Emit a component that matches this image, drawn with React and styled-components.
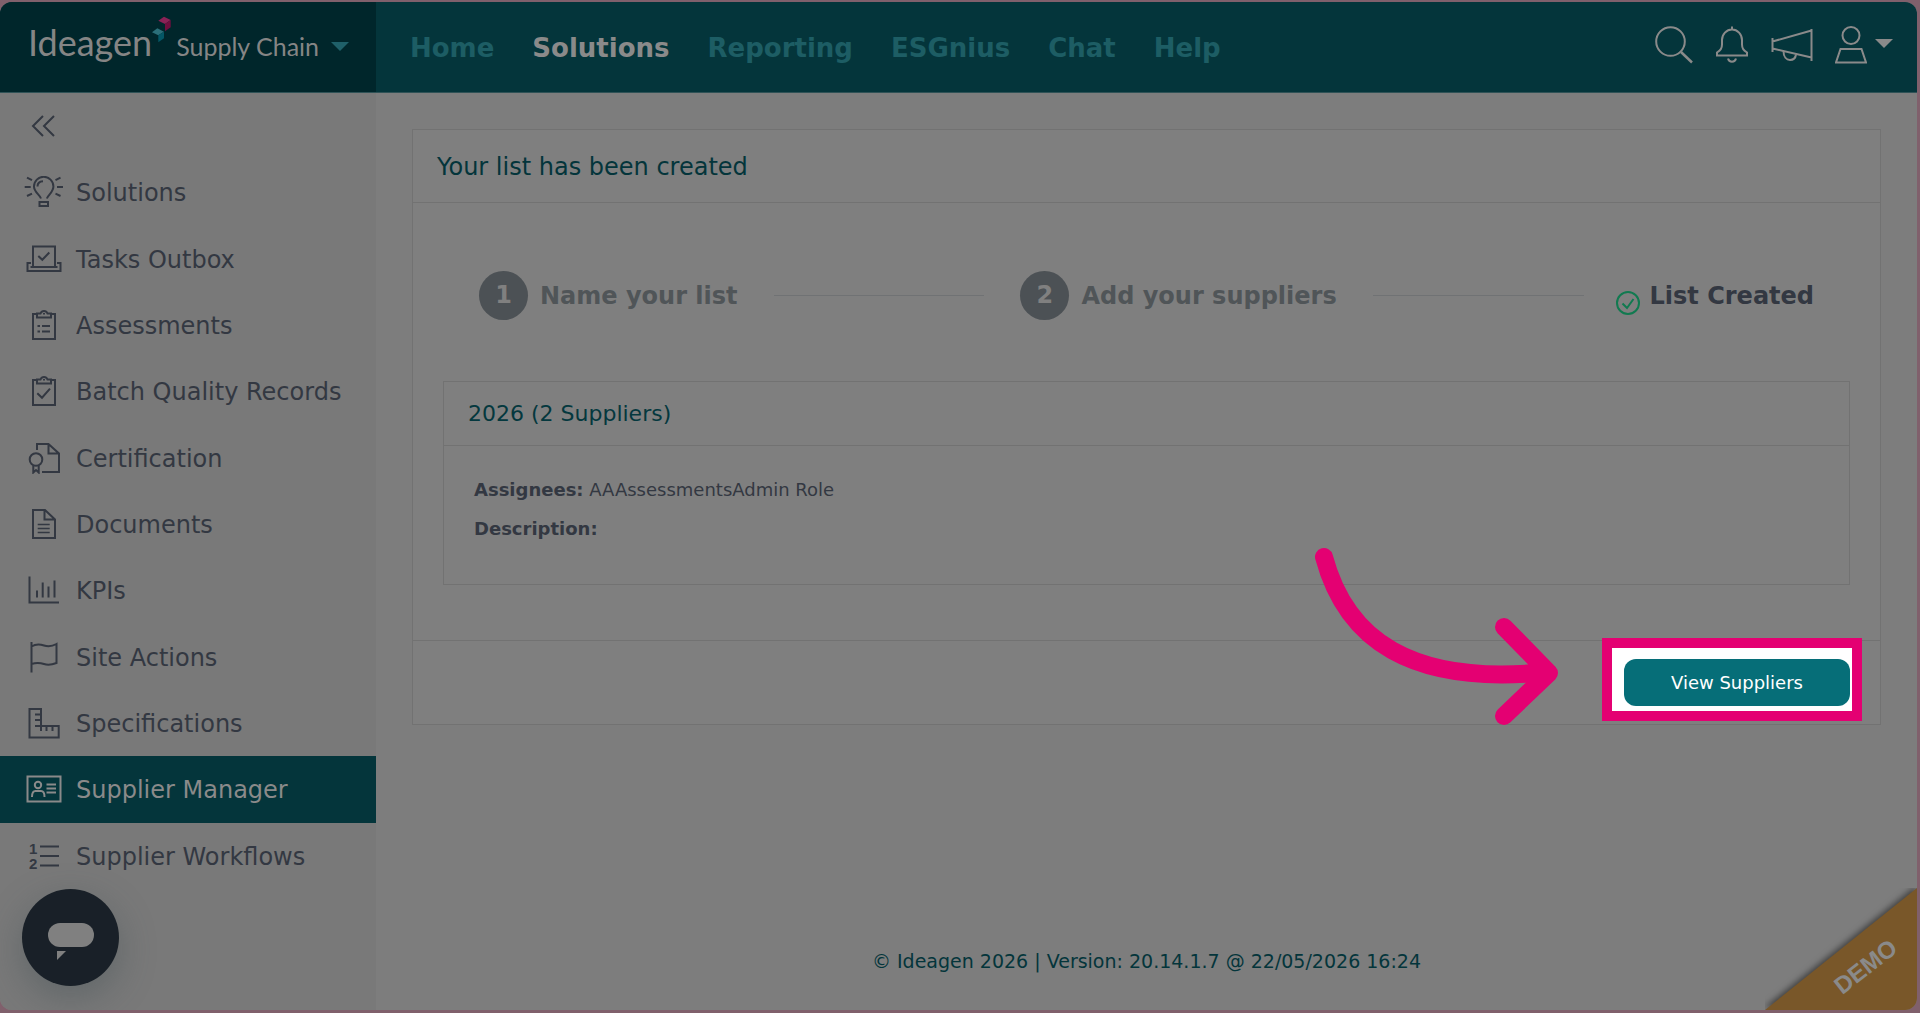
import React from "react";
import styled, { createGlobalStyle } from "styled-components";

const Icon = ({ children, width = 40, height = 32, stroke = 2 }) => (
  <svg
    width={width}
    height={height}
    viewBox={`0 0 ${width} ${height}`}
    fill="none"
    stroke="currentColor"
    strokeWidth={stroke}
    aria-hidden="true"
  >
    {children}
  </svg>
);

const ClipboardFrame = () => (
  <>
    <path d="M13 5H9v25h22V5h-4" />
    <path d="M13 8.500V4.500h3.500c.8-2 2-2.500 3.500-2.500s2.700.5 3.500 2.500H27v4z" />
    <path d="M19 4.800h2" strokeWidth="1.500" />
  </>
);

const menu = [
  {
    label: "Solutions",
    icon: (
      <>
        <path d="M17 22.500c-1.500-4-7-6.500-7-12a9.700 9.700 0 0 1 19.400 0c0 5.500-5 8-6.600 12" />
        <path d="M13.500 10.500c0-3 2-5 5.500-5.200M15.500 26h8.500v4h-8.500z" />
        <path d="M.7 11h6M33 11h6M3 1.700l5 2.500M36.500 1.700l-5 2.500M3 20l5-2.300M36.500 20l-5-2.300" />
      </>
    ),
  },
  {
    label: "Tasks Outbox",
    icon: (
      <>
        <path d="M9 24V3.500h22V24M6.500 24h27" />
        <path d="M7 20H3.500v8h33v-8H33M14.300 13l4 3.800 7-7.300" />
      </>
    ),
  },
  {
    label: "Assessments",
    icon: (
      <>
        <ClipboardFrame />
        <path d="M13.500 17H16M18 17h8M13.500 22.500H16M18 22.500h8" />
      </>
    ),
  },
  {
    label: "Batch Quality Records",
    icon: (
      <>
        <ClipboardFrame />
        <path d="M13.300 18.200l4.700 4.500 8-9" />
      </>
    ),
  },
  {
    label: "Certification",
    icon: (
      <>
        <path d="M13 8V2h11.500L35 11.500V30H18M24.500 2v9.500H35" />
        <circle cx="12" cy="17.500" r="6.300" />
        <path d="M9.300 23.500v7l2.700-2.500 2.700 2.500v-7" />
      </>
    ),
  },
  {
    label: "Documents",
    icon: (
      <>
        <path d="M9 2h12l10 9.500V30H9zM20.500 2v9.500H31" />
        <path d="M13.700 16.500h12M13.700 20.500h12M13.700 24.500h12" strokeWidth="1.500" />
      </>
    ),
  },
  {
    label: "KPIs",
    icon: (
      <path d="M5.500 2.500v26H35M13 16.500v7M18.700 8.500v15M24.500 12.500v11M30.500 6.500v17" />
    ),
  },
  {
    label: "Site Actions",
    icon: (
      <path d="M7.500 1v30.500M7.500 5.500c4-2.500 8-2.500 12.500-1s8 1 12.500-1.500v19c-4.500 1.700-8 2.500-12.500 1s-8-1.500-12.500 0" />
    ),
  },
  {
    label: "Specifications",
    icon: (
      <path d="M5.500 2H17v17h17.700v11.500H5.500zM11 7.500h6M11 13h6M11 19h6M17 19v5M22.500 19v5M28.500 19v5" />
    ),
  },
  {
    label: "Supplier Manager",
    active: true,
    icon: (
      <>
        <path d="M3.500 3.500h33v25h-33z" />
        <circle cx="14" cy="12" r="3.200" />
        <path d="M8 24c0-4 1.500-6 3.500-6h5.500c2 0 3.500 2 3.500 6M22.500 11.500H32M22.500 15.500H32M22.500 19.500H32" />
      </>
    ),
  },
  {
    label: "Supplier Workflows",
    icon: (
      <>
        <path d="M16 6.500h19M16 16h19M16 25.500h19" />
        <g
          fill="currentColor"
          stroke="none"
          fontFamily="Liberation Sans, sans-serif"
          fontWeight="700"
          fontSize="15"
        >
          <text x="5" y="14">1</text>
          <text x="5" y="29">2</text>
        </g>
      </>
    ),
  },
];

const links = ["Home", "Solutions", "Reporting", "ESGnius", "Chat", "Help"];

const Header = () => (
  <TopBar>
    <Brand type="button">
      <BrandName>Ideagen</BrandName>
      <svg width="20" height="28" viewBox="0 0 20 28" aria-hidden="true">
        <path d="M6.300 4.700L12 .7l6.700 3.300-5.700 4z" fill="#8a2256" />
        <path d="M13 8l5.700-4v7.300L13 15.300z" fill="#6f0f3f" />
        <path d="M0 16.300l5.300-4 6.700 3.400-5.700 3.600z" fill="#2b6f79" />
        <path d="M6.300 19.300l5.700-3.600v6.600l-5.700 4z" fill="#045766" />
      </svg>
      <Product>Supply Chain</Product>
      <Caret $color="#1f6069" />
    </Brand>
    <Nav>
      {links.map((link) => (
        <NavLink key={link} href="#" $active={link === "Solutions"}>
          {link}
        </NavLink>
      ))}
    </Nav>
    <Tools>
      <IconButton type="button" aria-label="Search">
        <Icon width={38} height={38}>
          <circle cx="15.500" cy="15.500" r="14.300" />
          <path d="M26 26l11 10.500" strokeWidth="2.500" />
        </Icon>
      </IconButton>
      <IconButton type="button" aria-label="Notifications">
        <Icon width={34} height={38}>
          <path d="M17 .5V3M2 29.500v-3c3.500-2.500 5-4 5-8V14a10 10.500 0 0 1 20 0v4.500c0 4 1.500 5.500 5 8v3z" />
          <path d="M13 32.500c.5 2 2 3.200 4 3.200s3.500-1.200 4-3.200" />
        </Icon>
      </IconButton>
      <IconButton type="button" aria-label="Announcements">
        <Icon width={42} height={38}>
          <path d="M1.500 12v14M1.500 15.500l39-11M1.500 22.500l39 9M40.500 3v32" />
          <path d="M12.500 25c0 6 3 9 6.500 9s5.500-2 6-5.500" />
        </Icon>
      </IconButton>
      <IconButton type="button" aria-label="Account">
        <Icon width={32} height={38}>
          <circle cx="16" cy="9.500" r="8.500" />
          <path d="M5.500 23h21l4.500 13.500H1z" />
        </Icon>
        <Caret $color="#8a8a8a" />
      </IconButton>
    </Tools>
  </TopBar>
);

const Sidebar = () => (
  <Side>
    <Collapse type="button" aria-label="Collapse menu">
      <Icon width={24} height={22}>
        <path d="M12 1L2 11l10 10M23 1L13 11l10 10" />
      </Icon>
    </Collapse>
    <Menu>
      {menu.map(({ label, icon, active }) => (
        <MenuItem key={label} href="#" $active={active}>
          <Icon>{icon}</Icon>
          <span>{label}</span>
        </MenuItem>
      ))}
    </Menu>
  </Side>
);

const Steps = () => (
  <StepBar>
    <Step>
      <StepNumber>1</StepNumber>
      Name your list
    </Step>
    <StepLine />
    <Step>
      <StepNumber>2</StepNumber>
      Add your suppliers
    </Step>
    <StepLine />
    <Step $current>
      <Done>
        <Icon width={24} height={24}>
          <circle cx="12" cy="12" r="11" />
          <path d="M6.500 12.500l4.500 4.500 6.500-9" />
        </Icon>
      </Done>
      List Created
    </Step>
  </StepBar>
);

const App = () => (
  <Page>
    <GlobalStyle />
    <Shell>
      <Header />
      <Body>
        <Sidebar />
        <Main>
          <Card>
            <CardTitle>Your list has been created</CardTitle>
            <Steps />
            <Summary>
              <SummaryTitle>2026 (2 Suppliers)</SummaryTitle>
              <Details>
                <p>
                  <b>Assignees:</b> AAAssessmentsAdmin Role
                </p>
                <p>
                  <b>Description:</b>
                </p>
              </Details>
            </Summary>
            <CardFooter>
              <Highlight>
                <ViewButton type="button">View Suppliers</ViewButton>
                <Arrow width="250" height="190" viewBox="0 0 250 190" aria-hidden="true">
                  <path d="M11 17C33 99 97 146 234 132M191 87l45 46-45 43" />
                </Arrow>
              </Highlight>
            </CardFooter>
          </Card>
          <Copyright>
            © Ideagen 2026 | Version: 20.14.1.7 @ 22/05/2026 16:24
          </Copyright>
        </Main>
      </Body>
      <ChatButton type="button" aria-label="Open chat">
        <svg width="46" height="38" viewBox="0 0 46 38" fill="#808080" aria-hidden="true">
          <rect width="46" height="24" rx="12" />
          <path d="M9 28h9l-9 9z" />
        </svg>
      </ChatButton>
      <Ribbon width="152" height="122" viewBox="0 0 152 122">
        <path d="M0 122L152 0V122z" fill="#795729" />
        <text x="100" y="87" transform="rotate(-38 100 78)" textAnchor="middle">
          DEMO
        </text>
      </Ribbon>
    </Shell>
  </Page>
);

const GlobalStyle = createGlobalStyle`
  * {
    box-sizing: border-box;
  }
  body {
    margin: 0;
    font-family: Verdana, "DejaVu Sans", sans-serif;
    color: #333842;
  }
  button {
    font: inherit;
    color: inherit;
    background: none;
    border: 0;
    padding: 0;
    cursor: pointer;
  }
  a {
    text-decoration: none;
  }
  svg {
    display: block;
    flex-shrink: 0;
  }
`;

const Page = styled.div`
  min-height: 100vh;
  display: flex;
  padding: 2px 3px 3px 0;
  background: #80606c;
`;

const Shell = styled.div`
  flex: 1;
  display: flex;
  flex-direction: column;
  position: relative;
  overflow: hidden;
  border-radius: 12px;
  background: #7d7d7d;
`;

const TopBar = styled.header`
  display: flex;
  height: 91px;
  background: #04353b;
  border-bottom: 1px solid #2f5256;
`;

const Brand = styled.button`
  && {
    display: flex;
    align-items: flex-start;
    width: 376px;
    padding: 14px 0 0 28px;
    background: #00262b;
    color: #858585;
    font-family: Lato, sans-serif;
  }
`;

const BrandName = styled.span`
  font-size: 36px;
  line-height: 53px;
`;

const Product = styled.span`
  margin: 0 12px 0 4px;
  font-size: 25px;
  line-height: 60px;
`;

const Caret = styled.span`
  width: 0;
  height: 0;
  margin-top: 26px;
  border: 9px solid transparent;
  border-top-color: ${(props) => props.$color};
  border-bottom: 0;
`;

const Nav = styled.nav`
  display: flex;
  align-items: center;
  gap: 38px;
  padding: 2px 0 0 34px;
`;

const NavLink = styled.a`
  font-size: 26px;
  line-height: 32px;
  font-weight: 700;
  color: ${(props) => (props.$active ? "#8a8a8a" : "#1d5d64")};
`;

const Tools = styled.div`
  display: flex;
  align-items: flex-start;
  gap: 22px;
  margin-left: auto;
  padding: 24px 24px 0 0;
`;

const IconButton = styled.button`
  && {
    display: flex;
    color: #8a8a8a;
  }
  ${Caret} {
    margin: 13px 0 0 8px;
  }
`;

const Body = styled.div`
  flex: 1;
  display: flex;
`;

const Side = styled.aside`
  width: 376px;
  flex-shrink: 0;
  background: #797979;
`;

const Collapse = styled.button`
  && {
    display: flex;
    align-items: center;
    height: 66px;
    padding-left: 31px;
  }
`;

const Menu = styled.nav`
  display: grid;
  grid-auto-rows: 1fr;
  height: 730px;
`;

const MenuItem = styled.a`
  display: flex;
  align-items: center;
  gap: 12px;
  padding-left: 24px;
  font-size: 24px;
  white-space: nowrap;
  color: ${(props) => (props.$active ? "#8a8a8a" : "#333842")};
  background: ${(props) => (props.$active ? "#04353b" : "transparent")};
  span {
    padding-top: 2px;
  }
`;

const Main = styled.main`
  flex: 1;
  display: flex;
  flex-direction: column;
  padding: 36px 36px 35px;
  color: #333842;
`;

const Card = styled.section`
  border: 1px solid #727272;
  background: #7f7f7f;
`;

const CardTitle = styled.h1`
  margin: 0;
  padding: 2px 24px 0;
  font-size: 24px;
  line-height: 70px;
  font-weight: 400;
  color: #04353b;
  border-bottom: 1px solid #727272;
`;

const StepBar = styled.div`
  display: flex;
  align-items: center;
  gap: 36px;
  padding: 68px 66px 61px;
`;

const Step = styled.div`
  display: flex;
  align-items: center;
  gap: 12px;
  font-size: 24px;
  font-weight: 700;
  white-space: nowrap;
  color: ${(props) => (props.$current ? "#333842" : "#505558")};
`;

const StepNumber = styled.span`
  width: 49px;
  height: 49px;
  border-radius: 50%;
  background: #4c5155;
  color: #808080;
  line-height: 49px;
  text-align: center;
`;

const StepLine = styled.div`
  flex: 1;
  height: 1px;
  background: #707274;
`;

const Done = styled.span`
  padding-top: 14px;
  margin: 0 -2px 0 -4px;
  color: #117a50;
`;

const Summary = styled.section`
  margin: 0 30px 55px;
  border: 1px solid #727272;
`;

const SummaryTitle = styled.h2`
  margin: 0;
  padding: 0 24px;
  font-size: 22px;
  line-height: 63px;
  font-weight: 400;
  color: #04383e;
  border-bottom: 1px solid #727272;
`;

const Details = styled.div`
  padding: 24px 30px 36px;
  font-size: 18px;
  line-height: 39px;
  p {
    margin: 0;
  }
`;

const CardFooter = styled.footer`
  display: flex;
  justify-content: flex-end;
  align-items: flex-start;
  height: 84px;
  padding-right: 18px;
  border-top: 1px solid #727272;
`;

const Highlight = styled.div`
  position: relative;
  margin-top: -3px;
  padding: 11px 2px 5px 12px;
  border: 10px solid #e40072;
  background: #ffffff;
`;

const ViewButton = styled.button`
  && {
    display: block;
    width: 226px;
    height: 47px;
    border-radius: 12px;
    background: #066e78;
    color: #ffffff;
    font-size: 18px;
  }
`;

const Arrow = styled.svg`
  position: absolute;
  right: 289px;
  bottom: -19px;
  fill: none;
  stroke: #e40072;
  stroke-width: 18;
  stroke-linecap: round;
  stroke-linejoin: round;
`;

const Copyright = styled.p`
  margin: auto 0 0;
  font-size: 19px;
  line-height: 28px;
  text-align: center;
  color: #04353b;
`;

const ChatButton = styled.button`
  && {
    position: absolute;
    left: 22px;
    bottom: 24px;
    display: flex;
    justify-content: center;
    width: 97px;
    height: 97px;
    padding-top: 34px;
    border-radius: 50%;
    background: #192028;
    box-shadow: 0 12px 36px rgba(60, 75, 80, 0.4);
  }
`;

const Ribbon = styled.svg`
  position: absolute;
  right: 0;
  bottom: 0;
  fill: #8a8a8a;
  font-family: "Liberation Sans", Arial, sans-serif;
  font-size: 24px;
  font-weight: 700;
  path {
    filter: drop-shadow(-1px -2px 3px rgba(0, 0, 0, 0.5));
  }
`;

export default App;
